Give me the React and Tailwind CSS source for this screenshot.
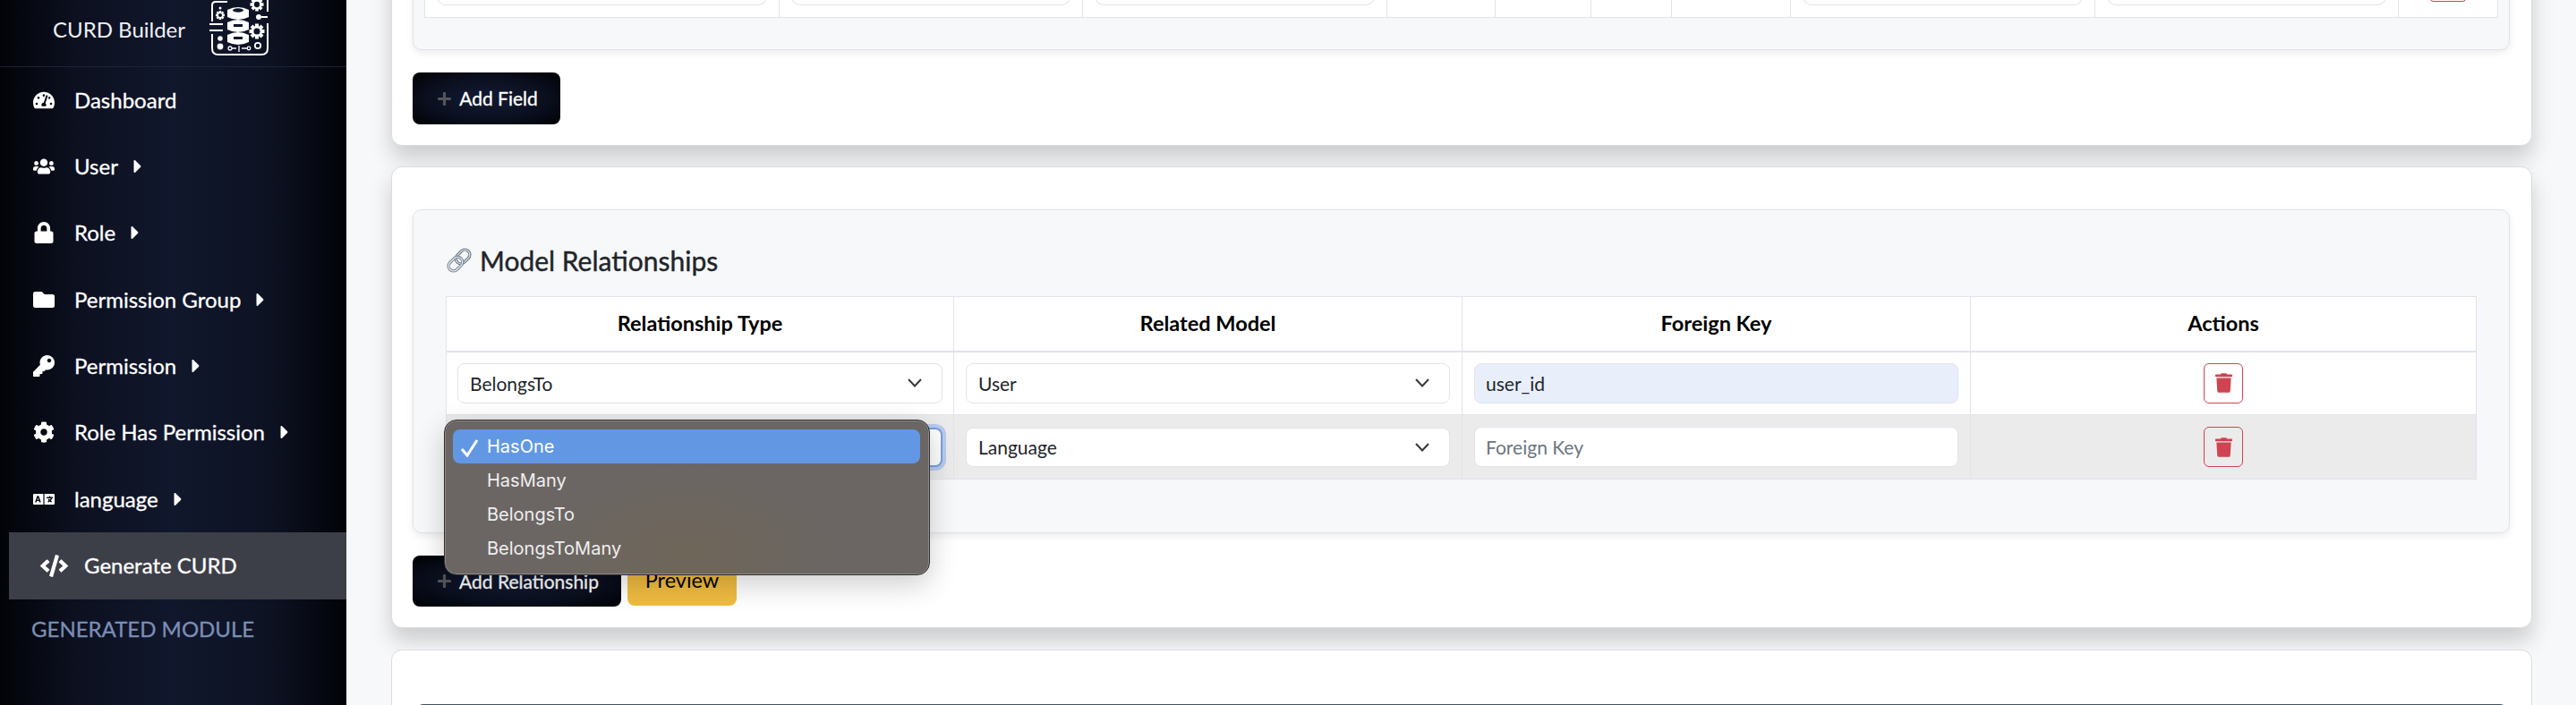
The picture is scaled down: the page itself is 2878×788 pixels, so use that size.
import React from 'react'
import {
  FaTachometerAlt,
  FaUsers,
  FaLock,
  FaFolder,
  FaKey,
  FaCog,
  FaLanguage,
  FaCode,
  FaCaretRight,
  FaPlus,
  FaTrash,
} from 'react-icons/fa'

const navItems = [
  { label: 'Dashboard', icon: FaTachometerAlt },
  { label: 'User', icon: FaUsers, caret: true },
  { label: 'Role', icon: FaLock, caret: true },
  { label: 'Permission Group', icon: FaFolder, caret: true },
  { label: 'Permission', icon: FaKey, caret: true },
  { label: 'Role Has Permission', icon: FaCog, caret: true },
  { label: 'language', icon: FaLanguage, caret: true },
]

const options = ['HasOne', 'HasMany', 'BelongsTo', 'BelongsToMany']

const Gear = ({ cx, cy, r }) => (
  <g>
    {[0, 45, 90, 135].map((a) => (
      <rect
        key={a}
        x={cx - r * 0.24}
        y={cy - r}
        width={r * 0.48}
        height={r * 2}
        fill="white"
        transform={`rotate(${a} ${cx} ${cy})`}
      />
    ))}
    <circle cx={cx} cy={cy} r={r * 0.72} fill="white" />
    <circle cx={cx} cy={cy} r={r * 0.42} fill="#10162a" />
  </g>
)

const Disk = ({ y, top }) => (
  <g>
    <path
      d={`M20 ${y + 3} Q32 ${y - 3} 44 ${y + 3} V${y + 11} Q32 ${y + 17} 20 ${y + 11} Z`}
      fill="white"
    />
    {top ? (
      <ellipse cx="32" cy={y + 3.5} rx="6" ry="2.2" fill="#10162a" />
    ) : (
      <rect x="27" y={y + 5} width="10" height="3" fill="#10162a" />
    )}
  </g>
)

const Logo = () => (
  <svg width="66" height="62" viewBox="0 0 66 62" className="shrink-0">
    <path d="M3 24 V6 Q3 2 7 2 H20 M3 38 V54 Q3 61 10 61 H58 Q65 61 65 54 V26 M65 13 V0" fill="none" stroke="white" strokeWidth="2" />
    <Disk y={8} top />
    <Disk y={22} />
    <Disk y={36} />
    <Gear cx={53} cy={5} r={7.5} />
    <Gear cx={53} cy={35} r={8.5} />
    <Gear cx={12} cy={17} r={5} />
    <circle cx="12" cy="9" r="1.5" fill="white" />
    <circle cx="55" cy="19" r="3" fill="white" />
    <path d="M58 19 H65" stroke="white" strokeWidth="2" />
    <path d="M0 27 H15 M0 34 H15" stroke="white" strokeWidth="2" />
    <circle cx="12" cy="43" r="2.8" fill="white" />
    <circle cx="12" cy="52" r="3.4" fill="white" />
    <circle cx="23" cy="54" r="2" fill="none" stroke="white" strokeWidth="1.3" />
    <path d="M25 54 H30 M33 51 V58 M36 54 H42" stroke="white" strokeWidth="1.3" />
    <circle cx="44" cy="54" r="1.8" fill="none" stroke="white" strokeWidth="1.3" />
    <circle cx="54" cy="51" r="3.2" fill="none" stroke="white" strokeWidth="1.8" />
  </svg>
)

// the link emoji, no colour emoji font is installed
const LinkEmoji = () => (
  <svg width="30" height="30" viewBox="0 0 30 30" className="shrink-0">
    <g transform="rotate(-45 15 15)" fill="none">
      <rect x="12" y="9.5" width="17.5" height="11" rx="5.5" stroke="#6f7a86" strokeWidth="3.4" />
      <rect x="12" y="9.5" width="17.5" height="11" rx="5.5" stroke="#d9e0e8" strokeWidth="1.2" />
      <rect x="0.5" y="9.5" width="17.5" height="11" rx="5.5" stroke="#7f8b98" strokeWidth="3.4" />
      <rect x="0.5" y="9.5" width="17.5" height="11" rx="5.5" stroke="#e6ebf1" strokeWidth="1.2" />
    </g>
  </svg>
)

const NavRow = ({ item }) => {
  const Icon = item.icon
  return (
    <a className="flex items-center h-full pl-[34px] text-[24px] [-webkit-text-stroke:0.3px_white]">
      <span className="w-[30px] flex justify-center mr-[19px]">
        <Icon className="h-[24px] w-auto" />
      </span>
      {item.label}
      {item.caret && <FaCaretRight className="ml-[15px] w-[14px] h-[24px]" />}
    </a>
  )
}

const Sidebar = () => (
  <aside className="w-[387px] h-[788px] shrink-0 text-white bg-[linear-gradient(90deg,#020308_0%,#0c1020_22%,#11172c_50%,#0d1223_78%,#020308_100%)]">
    <div className="h-[75px] border-b border-[#1d2336] flex items-start pl-[59px]">
      <span className="w-[175px] text-[24px] leading-[66px] text-[#eef0f4] whitespace-nowrap">CURD Builder</span>
      <Logo />
    </div>
    <nav>
      <div className="h-[74px]">
        <NavRow item={navItems[0]} />
      </div>
      {navItems.slice(1).map((item) => (
        <div key={item.label} className="h-[74.3px]">
          <NavRow item={item} />
        </div>
      ))}
      <div className="ml-[10px] h-[75px] bg-[#3d3f48] flex items-center pl-[35px] text-[24px] [-webkit-text-stroke:0.3px_white]">
        <FaCode className="w-[31px] h-[25px] mr-[18px]" />
        Generate CURD
      </div>
      <div className="pl-[35px] pt-[15px] text-[24px] leading-[36px] text-[#7b8fb5] [-webkit-text-stroke:0.3px_#7b8fb5]">GENERATED MODULE</div>
    </nav>
  </aside>
)

const Field = ({ w }) => (
  <td className={`${w} border-r border-[#e2e3ea] px-[13px] pb-[13px] pt-[6px] align-bottom`}>
    <div className="h-[26px] border border-[#e2e3ea] border-t-0 rounded-b-[10px]" />
  </td>
)

const DarkButton = ({ children, className }) => (
  <button className={`flex items-center justify-center rounded-[8px] pl-[2px] text-white text-[21px] [-webkit-text-stroke:0.3px_white] bg-[radial-gradient(ellipse_at_center,#131a33_0%,#0b1020_55%,#010104_100%)] ${className}`}>
    <FaPlus className="w-[17px] h-[17px] mr-[8px] text-[#55565a]" />
    {children}
  </button>
)

const Chevron = () => (
  <svg width="16" height="10" viewBox="0 0 16 10" className="shrink-0">
    <path d="M1 1 L8 8.5 L15 1" fill="none" stroke="#343a40" strokeWidth="2" />
  </svg>
)

const SelectBox = ({ value, height }) => (
  <div className={`${height} bg-white border border-[#e2e3ea] rounded-[8px] flex items-center justify-between pl-[13px] pr-[22px] text-[21px] text-[#212529]`}>
    <span>{value}</span>
    <Chevron />
  </div>
)

const DeleteButton = () => (
  <div className="w-[44px] h-[45px] mx-auto border border-[#cf4451] rounded-[6px] flex items-center justify-center">
    <FaTrash className="w-[19px] h-[22px] text-[#cf4451]" />
  </div>
)

const NativeMenu = () => (
  <div className="absolute left-[-2px] top-[138px] w-[543px] h-[174px] rounded-[14px] bg-[radial-gradient(ellipse_at_50%_85%,#6f6659_0%,#6b6664_45%,#6b6664_100%)] border border-[#2f2f2f] shadow-[inset_0_0_0_1px_#8c8885,0_10px_32px_rgba(0,0,0,0.2)] pl-[9px] pr-[10px] pt-[10px] z-20 font-['Inter',sans-serif] text-[20px] text-[#efefef]">
    {options.map((o, i) => (
      <div
        key={o}
        className={`h-[38px] flex items-center pl-[38px] rounded-[8px] relative ${i === 0 ? 'bg-[#6298e3] text-white' : ''}`}
      >
        {i === 0 && (
          <svg width="20" height="20" viewBox="0 0 20 20" className="absolute left-[9px] top-[11px]">
            <path d="M1 11 L7 18 L18 1" fill="none" stroke="white" strokeWidth="3" />
          </svg>
        )}
        {o}
      </div>
    ))}
  </div>
)

const App = () => {
  return (
    <div className="h-[788px] w-full overflow-hidden flex bg-[#f7f8fa] font-['Lato',sans-serif]">
      <Sidebar />
      <main className="flex-1 min-w-0 pl-[50px] pr-[49px] mt-[-64px]">
        {/* fields card, scrolled mostly out of view */}
        <section className="h-[227px] bg-white border border-[#dcdcdf] rounded-[12px] shadow-[0_14px_24px_rgba(0,0,0,0.18)] pl-[23px] pr-[24px] pt-[2px]">
          <div className="h-[117px] bg-[#f7f8fa] border border-[#e2e3ea] rounded-[10px] shadow-[0_3px_8px_rgba(0,0,0,0.08)] px-[12px] pt-[9px]">
            <table className="w-[2317px] h-[71px] table-fixed bg-white border border-[#e2e3ea]">
              <tbody>
                <tr>
                  <Field w="w-[396px]" />
                  <Field w="w-[339px]" />
                  <Field w="w-[340px]" />
                  <td className="w-[121px] border-r border-[#e2e3ea]" />
                  <td className="w-[107px] border-r border-[#e2e3ea]" />
                  <td className="w-[90px] border-r border-[#e2e3ea]" />
                  <td className="w-[133px] border-r border-[#e2e3ea]" />
                  <Field w="w-[340px]" />
                  <Field w="w-[339px]" />
                  <td className="align-bottom pb-[17px]">
                    <div className="w-[40px] mx-auto h-[4px] border border-t-0 border-[#cf4451] rounded-b-[4px]" />
                  </td>
                </tr>
              </tbody>
            </table>
          </div>
          <DarkButton className="mt-[25px] w-[165px] h-[58px]">Add Field</DarkButton>
        </section>

        {/* relationships card */}
        <section className="mt-[23px] h-[516px] bg-white border border-[#dcdcdf] rounded-[12px] shadow-[0_14px_24px_rgba(0,0,0,0.18)] pl-[23px] pr-[24px] pt-[47px]">
          <div className="h-[362px] bg-[#f7f8fa] border border-[#e2e3ea] rounded-[10px] shadow-[0_3px_8px_rgba(0,0,0,0.08)] px-[36px] pt-[34px]">
            <h3 className="flex items-center h-[44px] text-[#212529] text-[30px] leading-[44px] gap-[8px] [-webkit-text-stroke:0.4px_#212529]">
              <LinkEmoji />
              Model Relationships
            </h3>
            <div className="relative mt-[18px]">
              <table className="w-[2269px] table-fixed bg-white border border-[#e2e3ea] text-[23.5px]">
                <thead>
                  <tr className="h-[61px] border-b-2 border-[#e2e3ea] text-black">
                    <th className="w-[567px] font-bold border-r border-[#e2e3ea]">Relationship Type</th>
                    <th className="w-[568px] font-bold border-r border-[#e2e3ea]">Related Model</th>
                    <th className="w-[568px] font-bold border-r border-[#e2e3ea]">Foreign Key</th>
                    <th className="font-bold">Actions</th>
                  </tr>
                </thead>
                <tbody>
                  <tr className="h-[71px] border-b border-[#e2e3ea]">
                    <td className="px-[12px] border-r border-[#e2e3ea]">
                      <SelectBox value="BelongsTo" height="h-[45px]" />
                    </td>
                    <td className="px-[13px] border-r border-[#e2e3ea]">
                      <SelectBox value="User" height="h-[45px]" />
                    </td>
                    <td className="px-[13px] border-r border-[#e2e3ea]">
                      <input
                        readOnly
                        value="user_id"
                        className="w-full h-[45px] bg-[#e8effb] border border-[#e2e3ea] rounded-[8px] px-[12px] text-[21px] text-[#212529] outline-none"
                      />
                    </td>
                    <td>
                      <DeleteButton />
                    </td>
                  </tr>
                  <tr className="h-[72px] bg-[#ebebeb]">
                    <td className="px-[12px] border-r border-[#e2e3ea]">
                      <div className="h-[44px] rounded-[8px] bg-white border-2 border-[#7ba0e0] ring-4 ring-[#b8cbee]" />
                    </td>
                    <td className="px-[13px] border-r border-[#e2e3ea]">
                      <SelectBox value="Language" height="h-[44px]" />
                    </td>
                    <td className="px-[13px] border-r border-[#e2e3ea]">
                      <input
                        readOnly
                        placeholder="Foreign Key"
                        className="w-full h-[45px] bg-white border border-[#e2e3ea] rounded-[8px] px-[12px] text-[21px] placeholder:text-[#6c757d] outline-none"
                      />
                    </td>
                    <td>
                      <DeleteButton />
                    </td>
                  </tr>
                </tbody>
              </table>
              <NativeMenu />
            </div>
          </div>
          <div className="flex items-start gap-[7px] mt-[25px]">
            <DarkButton className="w-[233px] h-[57px]">Add Relationship</DarkButton>
            <button className="w-[122px] h-[56px] rounded-[8px] bg-[#f0bc40] text-black text-[23.5px]">Preview</button>
          </div>
        </section>

        {/* next card, only its top is in view */}
        <section className="mt-[24px] h-[200px] bg-white border border-[#dcdcdf] rounded-[12px] px-[27px] pt-[60px]">
          <div className="h-[60px] border-t-2 border-[#3f5063] rounded-t-[8px]" />
        </section>
      </main>
    </div>
  )
}

export default App
